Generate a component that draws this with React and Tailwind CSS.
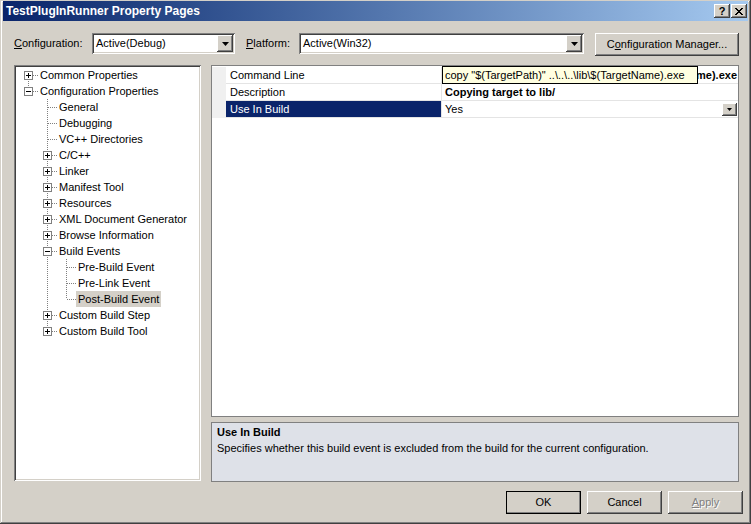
import React from 'react';

const raised =
  'shadow-[inset_-1px_-1px_0_#404040,inset_1px_1px_0_#ffffff,inset_-2px_-2px_0_#808080,inset_2px_2px_0_#d4d0c8]';
const sunken =
  'shadow-[inset_1px_1px_0_#808080,inset_-1px_-1px_0_#ffffff,inset_2px_2px_0_#404040,inset_-2px_-2px_0_#d4d0c8]';

const tree = [
  { label: 'Common Properties', guides: ['first'], box: '+' },
  { label: 'Configuration Properties', guides: ['last'], box: '-' },
  { label: 'General', guides: ['none', 'mid'] },
  { label: 'Debugging', guides: ['none', 'mid'] },
  { label: 'VC++ Directories', guides: ['none', 'mid'] },
  { label: 'C/C++', guides: ['none', 'mid'], box: '+' },
  { label: 'Linker', guides: ['none', 'mid'], box: '+' },
  { label: 'Manifest Tool', guides: ['none', 'mid'], box: '+' },
  { label: 'Resources', guides: ['none', 'mid'], box: '+' },
  { label: 'XML Document Generator', guides: ['none', 'mid'], box: '+' },
  { label: 'Browse Information', guides: ['none', 'mid'], box: '+' },
  { label: 'Build Events', guides: ['none', 'mid'], box: '-' },
  { label: 'Pre-Build Event', guides: ['none', 'pipe', 'mid'] },
  { label: 'Pre-Link Event', guides: ['none', 'pipe', 'mid'] },
  { label: 'Post-Build Event', guides: ['none', 'pipe', 'last'], selected: true },
  { label: 'Custom Build Step', guides: ['none', 'mid'], box: '+' },
  { label: 'Custom Build Tool', guides: ['none', 'last'], box: '+' },
];

function Guide({ kind, box }) {
  const dot = { stroke: '#808080', strokeWidth: 1, strokeDasharray: '1 1', shapeRendering: 'crispEdges' };
  const span = { pipe: [0, 16], first: [8, 16], mid: [0, 16], last: [0, 8] }[kind];
  const elbow = kind !== 'none' && kind !== 'pipe';
  return (
    <svg width="19" height="16" className="shrink-0">
      {span && <line x1="9.5" y1={span[0]} x2="9.5" y2={span[1]} {...dot} />}
      {elbow && <line x1={box ? 14 : 10} y1="8.5" x2="19" y2="8.5" {...dot} />}
      {box && (
        <g shapeRendering="crispEdges">
          <rect x="5.5" y="4.5" width="8" height="8" fill="#fff" stroke="#808080" />
          <line x1="7" y1="8.5" x2="12" y2="8.5" stroke="#000" />
          {box === '+' && <line x1="9.5" y1="6" x2="9.5" y2="11" stroke="#000" />}
        </g>
      )}
    </svg>
  );
}

function Arrow({ small }) {
  return small ? (
    <svg width="5" height="3"><path d="M0 0h5L2.5 3z" fill="#000" /></svg>
  ) : (
    <svg width="7" height="4"><path d="M0 0h7L3.5 4z" fill="#000" /></svg>
  );
}

function Combo({ value, width }) {
  return (
    <div className={`${sunken} ${width} h-[21px] bg-white flex items-center p-[2px]`}>
      <span className="flex-1 pl-[2px] leading-[17px]">{value}</span>
      <div className={`${raised} w-[16px] h-[17px] bg-[#d4d0c8] flex items-center justify-center`}>
        <Arrow />
      </div>
    </div>
  );
}

function Button({ children, isDefault, disabled }) {
  return (
    <div
      className={`${raised} w-[75px] h-[23px] bg-[#d4d0c8] flex items-center justify-center ${
        isDefault ? 'outline outline-1 outline-black -outline-offset-1' : ''
      } ${disabled ? 'text-[#808080] [text-shadow:1px_1px_0_#ffffff]' : ''}`}
    >
      {children}
    </div>
  );
}

export default function App() {
  return (
    <div
      className={`w-[751px] h-[524px] bg-[#d4d0c8] flex flex-col pt-[1px] px-[3px] text-[11px] text-black font-['Liberation_Sans',Arial,sans-serif] shadow-[inset_-1px_-1px_0_#404040,inset_1px_1px_0_#d4d0c8,inset_-2px_-2px_0_#808080,inset_2px_2px_0_#ffffff]`}
    >
      {/* title bar */}
      <div className="h-[20px] flex items-center justify-between pl-[3px] pr-[1px] bg-linear-to-r from-[#0a246a] to-[#a6caf0]">
        <span className="text-white font-bold text-[12px]">TestPlugInRunner Property Pages</span>
        <div className="flex gap-[1px]">
          <div className={`${raised} w-[16px] h-[14px] bg-[#d4d0c8] flex items-center justify-center font-bold text-[11px] leading-none`}>
            ?
          </div>
          <div className={`${raised} w-[16px] h-[14px] bg-[#d4d0c8] flex items-center justify-center`}>
            <svg width="8" height="7" shapeRendering="crispEdges">
              <path d="M0 0h2l2 2.5L6 0h2L5 3.5 8 7H6L4 4.5 2 7H0l3-3.5z" fill="#000" />
            </svg>
          </div>
        </div>
      </div>

      {/* configuration row */}
      <div className="mt-[12px] flex items-start pl-[11px]">
        <span className="w-[78px] leading-[21px]">
          <span className="underline">C</span>onfiguration:
        </span>
        <Combo value="Active(Debug)" width="w-[143px]" />
        <span className="ml-[11px] w-[53px] leading-[21px]">
          <span className="underline">P</span>latform:
        </span>
        <Combo value="Active(Win32)" width="w-[285px]" />
        <div className={`${raised} ml-[11px] w-[144px] h-[23px] bg-[#d4d0c8] flex items-center justify-center`}>
          C<span className="underline">o</span>nfiguration Manager...
        </div>
      </div>

      {/* main */}
      <div className="mt-[9px] h-[417px] flex pl-[11px]">
        <div className={`${sunken} w-[187px] h-[416px] bg-white p-[2px] overflow-hidden`}>
          <div className="pl-[3px] flex flex-col">
            {tree.map((item) => (
              <div key={item.label} className="flex h-[16px] items-center">
                {item.guides.map((g, i) => (
                  <Guide key={i} kind={g} box={i === item.guides.length - 1 ? item.box : undefined} />
                ))}
                <span className={`px-[2px] leading-[16px] whitespace-nowrap ${item.selected ? 'bg-[#d4d0c8]' : ''}`}>
                  {item.label}
                </span>
              </div>
            ))}
          </div>
        </div>

        <div className="ml-[10px] w-[528px] flex flex-col">
          <div className="h-[352px] border border-[#808080] bg-white pt-[1px]">
            <div className="relative flex flex-col">
              <div className="flex h-[17px]">
                <div className="w-[14px] bg-[#f0f0f0]" />
                <div className="w-[216px] pl-[4px] leading-[16px] border-b border-r border-[#e4e4e4]">Command Line</div>
                <div className="flex-1 flex justify-end overflow-hidden pr-[1px] leading-[16px] font-bold whitespace-nowrap border-b border-[#e4e4e4]">
                  copy "$(TargetPath)" ..\..\..\lib\$(TargetName).exe
                </div>
              </div>
              <div className="flex h-[17px]">
                <div className="w-[14px] bg-[#f0f0f0]" />
                <div className="w-[216px] pl-[4px] leading-[16px] border-b border-r border-[#e4e4e4]">Description</div>
                <div className="flex-1 pl-[3px] leading-[16px] font-bold border-b border-[#e4e4e4]">Copying target to lib/</div>
              </div>
              <div className="flex h-[17px]">
                <div className="w-[14px] bg-[#f0f0f0]" />
                <div className="w-[216px] pl-[4px] leading-[16px] bg-[#0a246a] text-white border-b border-r border-[#e4e4e4]">
                  Use In Build
                </div>
                <div className="flex-1 pl-[3px] flex items-center justify-between border-b border-[#e4e4e4]">
                  <span className="leading-[16px]">Yes</span>
                  <div className={`${raised} mr-[1px] w-[15px] h-[13px] bg-[#d4d0c8] flex items-center justify-center`}>
                    <Arrow small />
                  </div>
                </div>
              </div>
              <div className="absolute top-[-1px] left-[230px] w-[256px] h-[18px] border border-black bg-[#ffffe1] pl-[2px] leading-[16px] whitespace-nowrap overflow-hidden">
                copy "$(TargetPath)" ..\..\..\lib\$(TargetName).exe
              </div>
            </div>
          </div>

          <div className="mt-[5px] h-[60px] border border-[#808080] bg-[#dee1e8] pl-[5px] pt-[1px]">
            <div className="font-bold leading-[16px]">Use In Build</div>
            <div className="leading-[16px]">
              Specifies whether this build event is excluded from the build for the current configuration.
            </div>
          </div>
        </div>
      </div>

      {/* buttons */}
      <div className="mt-[9px] flex justify-end gap-[6px] pr-[5px]">
        <Button isDefault>OK</Button>
        <Button>Cancel</Button>
        <Button disabled>
          <span>
            <span className="underline">A</span>pply
          </span>
        </Button>
      </div>
    </div>
  );
}
